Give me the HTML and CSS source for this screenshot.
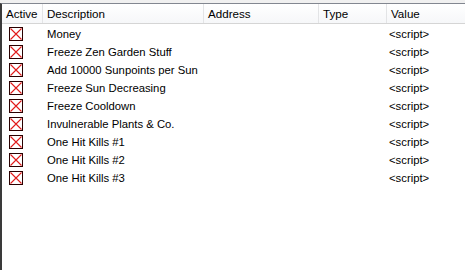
FILE: index.html
```html
<!DOCTYPE html>
<html>
<head>
<meta charset="utf-8">
<link rel="stylesheet" href="styles.css">
</head>
<body>
<svg width="0" height="0" class="defs">
  <symbol id="cbx" viewBox="0 0 14 14">
    <rect x="0.5" y="0.5" width="13" height="13" fill="#fff" stroke="#2a0000"/>
    <path d="M1.5 1.5 L12.5 12.5 M12.5 1.5 L1.5 12.5" stroke="#e21a1a" stroke-width="1.1" fill="none"/>
  </symbol>
</svg>
<div class="topstrip"></div>
<div class="list">
  <div class="header">
    <div class="hcell">Active</div>
    <div class="hcell">Description</div>
    <div class="hcell">Address</div>
    <div class="hcell">Type</div>
    <div class="hcell last">Value</div>
  </div>
  <div class="rows">
    <div class="row"><div class="cell"><svg class="cb"><use href="#cbx"/></svg></div><div class="cell desc">Money</div><div class="cell"></div><div class="cell"></div><div class="cell val">&lt;script&gt;</div></div>
    <div class="row"><div class="cell"><svg class="cb"><use href="#cbx"/></svg></div><div class="cell desc">Freeze Zen Garden Stuff</div><div class="cell"></div><div class="cell"></div><div class="cell val">&lt;script&gt;</div></div>
    <div class="row"><div class="cell"><svg class="cb"><use href="#cbx"/></svg></div><div class="cell desc">Add 10000 Sunpoints per Sun</div><div class="cell"></div><div class="cell"></div><div class="cell val">&lt;script&gt;</div></div>
    <div class="row"><div class="cell"><svg class="cb"><use href="#cbx"/></svg></div><div class="cell desc">Freeze Sun Decreasing</div><div class="cell"></div><div class="cell"></div><div class="cell val">&lt;script&gt;</div></div>
    <div class="row"><div class="cell"><svg class="cb"><use href="#cbx"/></svg></div><div class="cell desc">Freeze Cooldown</div><div class="cell"></div><div class="cell"></div><div class="cell val">&lt;script&gt;</div></div>
    <div class="row"><div class="cell"><svg class="cb"><use href="#cbx"/></svg></div><div class="cell desc">Invulnerable Plants &amp; Co.</div><div class="cell"></div><div class="cell"></div><div class="cell val">&lt;script&gt;</div></div>
    <div class="row"><div class="cell"><svg class="cb"><use href="#cbx"/></svg></div><div class="cell desc">One Hit Kills #1</div><div class="cell"></div><div class="cell"></div><div class="cell val">&lt;script&gt;</div></div>
    <div class="row"><div class="cell"><svg class="cb"><use href="#cbx"/></svg></div><div class="cell desc">One Hit Kills #2</div><div class="cell"></div><div class="cell"></div><div class="cell val">&lt;script&gt;</div></div>
    <div class="row"><div class="cell"><svg class="cb"><use href="#cbx"/></svg></div><div class="cell desc">One Hit Kills #3</div><div class="cell"></div><div class="cell"></div><div class="cell val">&lt;script&gt;</div></div>
  </div>
</div>
</body>
</html>
```

FILE: styles.css
```css
html, body {
  margin: 0;
  padding: 0;
  width: 465px;
  height: 270px;
  overflow: hidden;
  background: #ffffff;
  font-family: "Liberation Sans", Arial, sans-serif;
  font-size: 11.3px;
  color: #000;
}
.defs {
  position: absolute;
  width: 0;
  height: 0;
}
.topstrip {
  height: 3px;
  background: #f0f0f0;
}
.list {
  height: 267px;
  box-sizing: border-box;
  border-top: 1px solid #828790;
  border-left: 2px solid #3a3a3a;
  background: #fff;
}
.header, .row {
  display: grid;
  grid-template-columns: 41px 161px 115px 68px 1fr;
}
.header {
  height: 20px;
  box-sizing: border-box;
  background: linear-gradient(#ffffff, #f6f7f9);
  border-bottom: 1px solid #d5d5d5;
  font-size: 11.6px;
}
.hcell {
  display: flex;
  align-items: center;
  padding-left: 4px;
  border-right: 1px solid #e3e4e6;
  line-height: 1;
}
.hcell.last {
  border-right: none;
}
.rows {
  padding-top: 1px;
}
.row {
  height: 18px;
}
.cell {
  display: flex;
  align-items: center;
  padding-left: 3px;
  white-space: nowrap;
}
.cell.desc {
  padding-left: 4px;
}
.cell.val {
  padding-left: 2px;
}
.cb {
  display: block;
  width: 14px;
  height: 14px;
  margin-left: 4px;
}
```
